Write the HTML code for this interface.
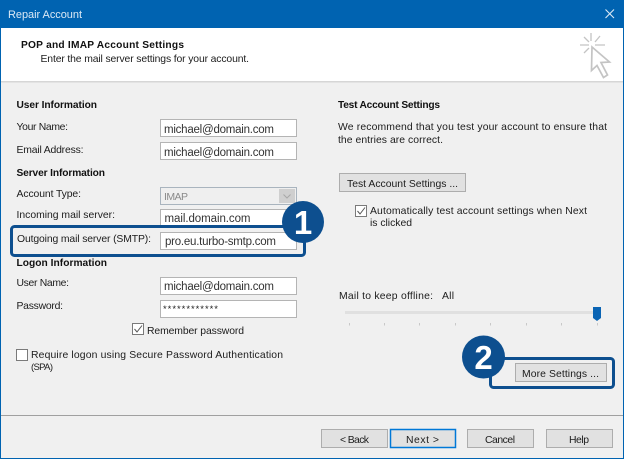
<!DOCTYPE html>
<html>
<head>
<meta charset="utf-8">
<style>
html,body{margin:0;padding:0;width:624px;height:459px;overflow:hidden;background:#f0f0f0}
svg{display:block;position:absolute;left:0;top:0;filter:blur(0.3px)}
text{font-family:"Liberation Sans",Arial,sans-serif;font-size:10.4px;fill:#1c1c1c}
.b{font-weight:bold;font-size:10.2px;fill:#111}
.i{fill:#333;font-size:11.5px}
</style>
</head>
<body>
<svg width="624" height="459" viewBox="0 0 624 459" xmlns="http://www.w3.org/2000/svg">
<!-- window -->
<rect x="0" y="0" width="624" height="459" fill="#0063b1"/>
<rect x="1" y="28" width="622" height="430" fill="#f0f0f0"/>
<rect x="1" y="28" width="622" height="53" fill="#fff"/>
<rect x="1" y="81" width="622" height="1.5" fill="#d6d6d6"/>
<rect x="1" y="415" width="622" height="1" fill="#a0a0a0"/>
<text x="8" y="18" textLength="74" style="fill:#dbe9f5;font-size:11px">Repair Account</text>
<path d="M605.5 9.5L614 18M614 9.5L605.5 18" stroke="#dbe9f5" stroke-width="1.1" fill="none"/>

<text x="21" y="48" textLength="163" class="b">POP and IMAP Account Settings</text>
<text x="40.5" y="62" textLength="208.5">Enter the mail server settings for your account.</text>

<!-- cursor icon -->
<g stroke="#c4c4c4" stroke-width="1.3" fill="none">
<path d="M591 33V41M580 45H589M595 45H605M584 37L589 42M600 36L595 42M584 53L589 48"/>
<path d="M592 47L609.5 62L601 62.5L607.5 75L603.5 77.5L597 65.5L591.5 70.5Z" stroke-width="1.7" fill="#fff"/>
</g>

<!-- left column -->
<text x="16.5" y="108" textLength="80.5" class="b">User Information</text>
<text x="16.5" y="130" textLength="51.5">Your Name:</text>
<rect x="160.5" y="119.5" width="136" height="17" fill="#fff" stroke="#b4b4b4"/>
<text x="164" y="133" textLength="110" class="i">michael@domain.com</text>
<text x="16.5" y="153" textLength="67">Email Address:</text>
<rect x="160.5" y="142.5" width="136" height="17" fill="#fff" stroke="#b4b4b4"/>
<text x="164" y="156" textLength="110" class="i">michael@domain.com</text>

<text x="16.5" y="176" textLength="88.5" class="b">Server Information</text>
<text x="16.5" y="197" textLength="64.5">Account Type:</text>
<rect x="160.5" y="187.5" width="136" height="17" fill="#efefef" stroke="#a9b4be"/>
<rect x="279" y="189" width="16" height="14" fill="#cfcfcf"/>
<path d="M283.5 194.5L287 198L290.5 194.5" stroke="#a8a8a8" fill="none"/>
<text x="164" y="200" textLength="24" class="i" style="fill:#8a8a8a;font-size:10.5px">IMAP</text>

<text x="16.5" y="218" textLength="98.5">Incoming mail server:</text>
<rect x="160.5" y="209.5" width="136" height="17" fill="#fff" stroke="#b4b4b4"/>
<text x="164.5" y="222" textLength="86" class="i">mail.domain.com</text>

<rect x="11.5" y="226.5" width="293" height="29" rx="3" fill="#f0f0f0" stroke="#0d4f8f" stroke-width="3"/>
<text x="17" y="242" textLength="134">Outgoing mail server (SMTP):</text>
<rect x="160.5" y="232.5" width="136" height="17" fill="#fff" stroke="#b4b4b4"/>
<text x="165" y="245" textLength="111" class="i">pro.eu.turbo-smtp.com</text>

<circle cx="303" cy="222" r="21" fill="#0d4f8f"/>
<text x="303" y="234" text-anchor="middle" class="b" style="fill:#fff;font-size:33px">1</text>

<text x="16.5" y="266" textLength="90.5" class="b">Logon Information</text>
<text x="16.5" y="286" textLength="52.5">User Name:</text>
<rect x="160.5" y="277.5" width="136" height="17" fill="#fff" stroke="#b4b4b4"/>
<text x="164" y="290" textLength="110" class="i">michael@domain.com</text>
<text x="16.5" y="309" textLength="46.5">Password:</text>
<rect x="160.5" y="300.5" width="136" height="17" fill="#fff" stroke="#b4b4b4"/>
<text x="163" y="312" textLength="55" style="font-size:9.5px">************</text>

<rect x="132.5" y="323.5" width="11" height="11" fill="#fff" stroke="#7a7a7a"/>
<path d="M134.5 329L137 332L142 325.5" stroke="#555" fill="none"/>
<text x="147" y="334" textLength="97">Remember password</text>

<rect x="16.5" y="349.5" width="11" height="11" fill="#fff" stroke="#7a7a7a"/>
<text x="31" y="358" textLength="252">Require logon using Secure Password Authentication</text>
<text x="31" y="370" textLength="22" style="font-size:9.5px">(SPA)</text>

<!-- right column -->
<text x="338" y="108" textLength="102" class="b">Test Account Settings</text>
<text x="338" y="130" textLength="269">We recommend that you test your account to ensure that</text>
<text x="338" y="143" textLength="105">the entries are correct.</text>

<rect x="339.5" y="173.5" width="126" height="18" fill="#e1e1e1" stroke="#adadad"/>
<text x="347" y="187" textLength="111">Test Account Settings ...</text>

<rect x="355.5" y="205.5" width="11" height="11" fill="#fff" stroke="#7a7a7a"/>
<path d="M357.5 211L360 214L365 207.5" stroke="#555" fill="none"/>
<text x="370" y="214" textLength="217">Automatically test account settings when Next</text>
<text x="370" y="226" textLength="42">is clicked</text>

<text x="339" y="299" textLength="94">Mail to keep offline:</text>
<text x="442" y="299" textLength="12">All</text>
<rect x="345" y="311" width="255" height="3" fill="#e0e0e0"/>
<path d="M593 307H601V318L597 321L593 318Z" fill="#0a64b4"/>
<g fill="#c8c8c8">
<rect x="349" y="323" width="1" height="2.5"/><rect x="384" y="323" width="1" height="2.5"/>
<rect x="419" y="323" width="1" height="2.5"/><rect x="455" y="323" width="1" height="2.5"/>
<rect x="490" y="323" width="1" height="2.5"/><rect x="526" y="323" width="1" height="2.5"/>
<rect x="561" y="323" width="1" height="2.5"/><rect x="597" y="323" width="1" height="2.5"/>
</g>

<rect x="490.5" y="358.5" width="123" height="29" rx="3" fill="#f0f0f0" stroke="#0d4f8f" stroke-width="3"/>
<rect x="515.5" y="363.5" width="91" height="18" fill="#e1e1e1" stroke="#adadad"/>
<text x="522" y="377" textLength="77">More Settings ...</text>
<circle cx="483.5" cy="357" r="21.5" fill="#0d4f8f"/>
<text x="483.5" y="369" text-anchor="middle" class="b" style="fill:#fff;font-size:33px">2</text>

<!-- bottom buttons -->
<rect x="321.5" y="429.5" width="66" height="18" fill="#e1e1e1" stroke="#adadad"/>
<text x="340" y="443" textLength="29">&lt; Back</text>
<rect x="390.5" y="429.5" width="65" height="18" fill="#e1e1e1" stroke="#0078d7" stroke-width="1.5"/>
<text x="406" y="443" textLength="33">Next &gt;</text>
<rect x="467.5" y="429.5" width="66" height="18" fill="#e1e1e1" stroke="#adadad"/>
<text x="485" y="443" textLength="30">Cancel</text>
<rect x="546.5" y="429.5" width="66" height="18" fill="#e1e1e1" stroke="#adadad"/>
<text x="569" y="443" textLength="20">Help</text>
</svg>
</body>
</html>
